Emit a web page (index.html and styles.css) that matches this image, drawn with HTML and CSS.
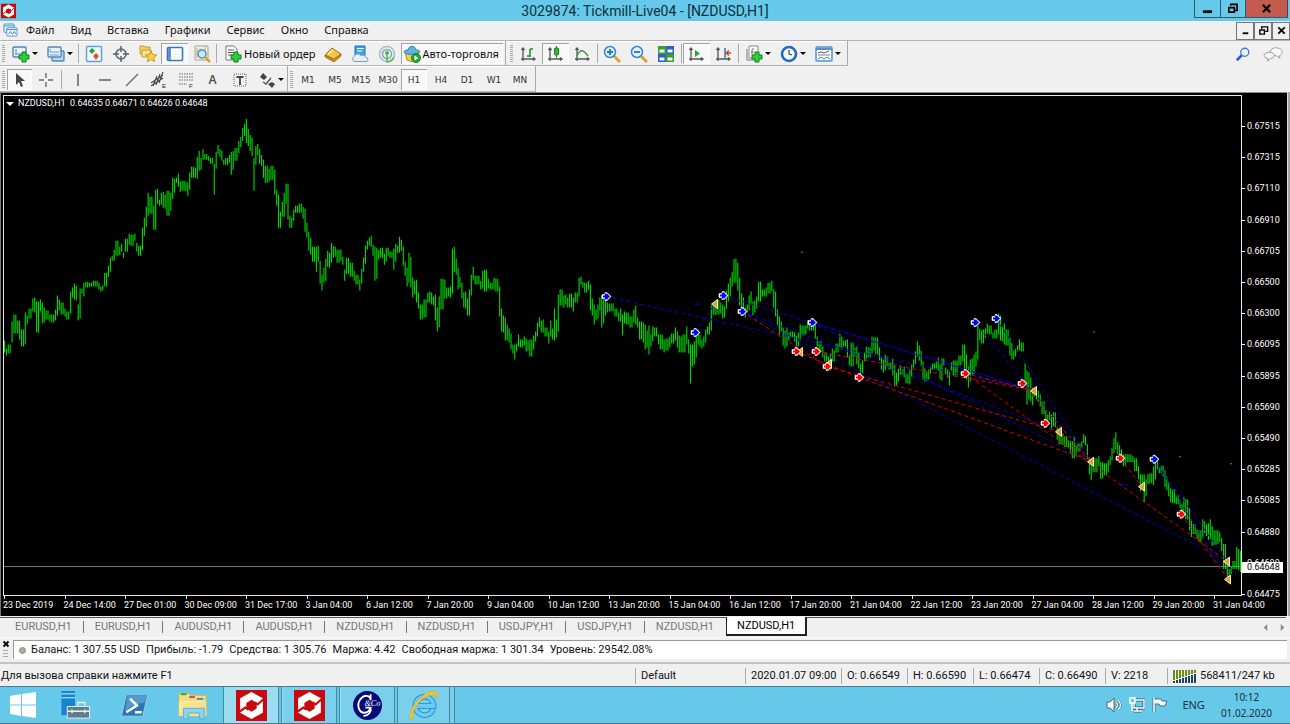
FILE: index.html
```html
<!DOCTYPE html>
<html lang="ru">
<head>
<meta charset="utf-8">
<title>3029874: Tickmill-Live04 - [NZDUSD,H1]</title>
<link rel="stylesheet" href="styles.css">
</head>
<body>
<svg class="defs" aria-hidden="true">
  <symbol id="logo" viewBox="0 0 30 30"><rect width="30" height="30" fill="#c9090f"/><path d="M15 2 26 8v14l-11 6L4 22V8z" fill="#fff"/><path d="M15 9.500l5 3v5.500l-5 3-5-3v-5.500z" fill="#c9090f"/><path d="M18 12l3 2 5.500-5M12 19l-3-2-5.500 4" fill="none" stroke="#c9090f" stroke-width="2"/></symbol>
  <symbol id="axes" viewBox="0 0 18 18"><path d="M4 3v13M2 14h14M2.500 5 4 3l1.500 2M14 12.500 16 14l-2 1.500" fill="none" stroke="#555" stroke-width="1.300"/></symbol>
  <symbol id="plus" viewBox="0 0 12 12"><path d="M4 1h4v3h3v4H8v3H4V8H1V4h3z" fill="#2fce35" stroke="#0a8417"/></symbol>
</svg>

<header class="titlebar">
  <svg class="app-icon" viewBox="0 0 30 30"><use href="#logo"/></svg>
  <h1>3029874: Tickmill-Live04 - [NZDUSD,H1]</h1>
  <div class="window-buttons">
    <button aria-label="Свернуть"><svg viewBox="0 0 12 12"><path d="M1 8h10v3H1z"/></svg></button>
    <button aria-label="Восстановить"><svg viewBox="0 0 12 12"><path d="M2 5h6v5H2zM4 3V1.500h7V8H9" fill="none" stroke="#000" stroke-width="1.800"/></svg></button>
    <button class="close" aria-label="Закрыть"><svg viewBox="0 0 12 12"><path d="M2 2l8 8M10 2l-8 8" stroke="#000" stroke-width="2.400"/></svg></button>
  </div>
</header>

<nav class="menubar">
  <svg class="menu-icon" viewBox="0 0 16 16"><rect x="1" y="1" width="11" height="9" rx="1" fill="#d7e9fa" stroke="#5a94cf"/><path d="M1 3h11" stroke="#5a94cf"/><rect x="4" y="5" width="11" height="9" rx="1" fill="#edf6ff" stroke="#5a94cf"/><path d="M4 7h11M6 12l2-3 2 3 2-3 2 3" fill="none" stroke="#4b83c4"/></svg>
  <button>Файл</button><button>Вид</button><button>Вставка</button><button>Графики</button><button>Сервис</button><button>Окно</button><button>Справка</button>
  <div class="mdi-buttons">
    <button aria-label="Свернуть график"><svg viewBox="0 0 12 12"><path d="M3 8h6v2H3z"/></svg></button>
    <button aria-label="Восстановить график"><svg viewBox="0 0 12 12"><path d="M2 5.500h5V10H2zM4 4V2h6.500v5H8" fill="none" stroke="#000" stroke-width="1.500"/></svg></button>
    <button aria-label="Закрыть график"><svg viewBox="0 0 12 12"><path d="M2.500 2.500l7 7M9.500 2.500l-7 7" stroke="#000" stroke-width="2"/></svg></button>
  </div>
</nav>

<div class="toolbar main-tools">
  <div class="group">
    <i class="grip"></i>
    <button class="drop" aria-label="Новый график"><svg viewBox="0 0 18 18"><rect x="1" y="2" width="13" height="10" rx="1" fill="#e9f3fc" stroke="#4e86bb" stroke-width="1.400"/><path d="M4 4v6M3 9h9" stroke="#6d8ba6"/><use href="#plus" x="6" y="6" width="12" height="12"/></svg></button>
    <button class="drop" aria-label="Профили"><svg viewBox="0 0 18 18"><rect x="5" y="6" width="12" height="10" rx="1" fill="#b9d7ef" stroke="#4e86bb" stroke-width="1.400"/><rect x="1" y="2" width="13" height="10" rx="1" fill="#e4f0fb" stroke="#4e86bb" stroke-width="1.400"/><path d="M3 4v3h9M3 10h9" fill="none" stroke="#7799b8"/></svg></button>
    <i class="sep"></i>
    <button class="tool" aria-label="Обзор рынка"><svg viewBox="0 0 18 18"><rect x="1.500" y="1.500" width="15" height="15" rx="1" fill="#f4faff" stroke="#5fa3d6" stroke-width="1.500"/><path d="M7 3l3 3-3 3-3-3z" fill="#20a43b"/><path d="M11 8l3 3-3 4-3-4z" fill="#e5502c"/></svg></button>
    <button class="tool" aria-label="Окно данных"><svg viewBox="0 0 18 18"><circle cx="9" cy="9" r="5" fill="none" stroke="#5b6065" stroke-width="1.500"/><path d="M9 1v6M9 11v6M1 9h6M11 9h6" stroke="#5b6065" stroke-width="1.500"/></svg></button>
    <button class="tool" aria-label="Навигатор"><svg viewBox="0 0 18 18"><path d="M1 1h4l1 1h5v7H1z" fill="#f6d365" stroke="#c49a2e"/><path d="M3 5h9v7H3z" fill="#ffe58b" stroke="#c49a2e"/><path d="M12 6l1.700 3.600 4 .4-3 2.700.9 4L12 14.600 8.500 16.700l.9-4-3-2.700 4-.4z" fill="#ffd33e" stroke="#bb7d15" stroke-width=".8"/></svg></button>
    <button class="tool on" aria-pressed="true" aria-label="Терминал"><svg viewBox="0 0 18 18"><rect x="1.500" y="2.500" width="15" height="13" rx="1" fill="#fff" stroke="#3577bd" stroke-width="1.600"/><path d="M2 3h3v12H2z" fill="#5c9ad8"/><path d="M7 6h8M7 9h8M7 12h8" stroke="#e2ebf3"/><path d="M3 5h1M3 8h1M3 11h1" stroke="#d02828"/></svg></button>
    <button class="tool" aria-label="Тестер стратегий"><svg viewBox="0 0 18 18"><path d="M2 1h13v14H2z" fill="#f4f1e9" stroke="#aaa28e"/><path d="M4 3v10M7 3v10M4 6h9M12 2v4" stroke="#c1a57e"/><circle cx="9" cy="9" r="4" fill="#cae7fa" fill-opacity=".85" stroke="#4a90c9" stroke-width="1.500"/><path d="M12 12l5 5" stroke="#dba32f" stroke-width="2.500"/></svg></button>
    <i class="sep"></i>
    <button class="labelled order"><svg viewBox="0 0 18 18"><path d="M2 1h8l3 3v11H2z" fill="#fff" stroke="#777"/><path d="M4 5h6M4 7.500h7M4 10h5" stroke="#555"/><use href="#plus" x="6" y="6" width="12" height="12"/></svg>Новый ордер</button>
    <button class="tool" aria-label="MetaEditor"><svg viewBox="0 0 18 18"><path d="M1 10l7-7 9 6-7 7z" fill="#f2c350" stroke="#a26c14"/><path d="M1 10l9 4 7-5v2l-7 6-9-5z" fill="#c78a22" stroke="#94600e" stroke-width=".7"/><path d="M4 9l5-4" stroke="#ffeeb0" stroke-width="1.500"/></svg></button>
    <button class="tool" aria-label="Виртуальный хостинг"><svg viewBox="0 0 18 18"><path d="M4 1h10v10H4z" fill="#38a4e8" stroke="#1b76bd"/><path d="M6 3.500h7M6 6h5" stroke="#fff"/><path d="M3 16.500a3 3 0 0 1 0-5 4 4 0 0 1 7-1 3.500 3.500 0 0 1 5 2 2 2 0 0 1 0 4z" fill="#e6edf5" stroke="#7f9ab8"/></svg></button>
    <button class="tool" aria-label="Сигналы"><svg viewBox="0 0 18 18"><circle cx="9" cy="9" r="7.500" fill="none" stroke="#a9bdcb" stroke-width="1.600"/><circle cx="9" cy="9" r="4.500" fill="none" stroke="#7fa6bb" stroke-width="1.600"/><circle cx="9" cy="8" r="2" fill="#44b64a"/><path d="M9 9v8a8 8 0 0 0 7-5" fill="none" stroke="#5cb862" stroke-width="1.600"/></svg></button>
    <button class="labelled auto on" aria-pressed="true"><svg viewBox="0 0 18 18"><path d="M2 7l2 8 5 2 6-3 1-7z" fill="#f3cc4b" stroke="#b58d20"/><path d="M5 5c1-5 7-5 8 0 4 0 5 2 2 3-4 2-9 2-13 0-2-1-1-3 3-3z" fill="#62b4e2" stroke="#2d7fb6"/><circle cx="13" cy="13" r="4.500" fill="#22a933" stroke="#118020"/><path d="M11.500 10.500v5L15.500 13z" fill="#fff"/></svg>Авто-торговля</button>
  </div>
  <div class="group">
    <i class="grip"></i>
    <button class="tool" aria-label="Бары"><svg viewBox="0 0 18 18"><use href="#axes"/><path d="M11 4v8M11 4h3M8 11h3" stroke="#17912a" stroke-width="1.500"/></svg></button>
    <button class="tool on" aria-pressed="true" aria-label="Свечи"><svg viewBox="0 0 18 18"><use href="#axes"/><path d="M10.500 1v12" stroke="#17912a"/><rect x="8.500" y="3" width="4" height="7" rx="1" fill="#27bd3c" stroke="#108020"/></svg></button>
    <button class="tool" aria-label="Линия"><svg viewBox="0 0 18 18"><use href="#axes"/><path d="M4 11c3-7 6-7 11 0" fill="none" stroke="#319a42" stroke-width="1.300"/></svg></button>
    <i class="sep"></i>
    <button class="tool" aria-label="Увеличить"><svg viewBox="0 0 18 18"><path d="M11 11l6 6" stroke="#d9a52d" stroke-width="3"/><circle cx="7" cy="7" r="5.500" fill="#e0f2ff" stroke="#3688cc" stroke-width="1.500"/><path d="M4 7h6M7 4v6" stroke="#2278bd" stroke-width="1.800"/></svg></button>
    <button class="tool" aria-label="Уменьшить"><svg viewBox="0 0 18 18"><path d="M11 11l6 6" stroke="#d9a52d" stroke-width="3"/><circle cx="7" cy="7" r="5.500" fill="#e0f2ff" stroke="#3688cc" stroke-width="1.500"/><path d="M4 7h6" stroke="#2278bd" stroke-width="1.800"/></svg></button>
    <button class="tool" aria-label="Упорядочить окна"><svg viewBox="0 0 18 18"><path d="M1 1h8v8H1zM9 9h8v8H9z" fill="#3d9f2b"/><path d="M9 1h8v8H9zM1 9h8v8H1z" fill="#2d62ba"/><path d="M2.500 4.500h5v3h-5zM10.500 4.500h5v3h-5zM2.500 12.500h5v3h-5zM10.500 12.500h5v3h-5z" fill="#eef6ff"/></svg></button>
    <i class="sep"></i>
    <button class="tool on" aria-pressed="true" aria-label="Автопрокрутка"><svg viewBox="0 0 18 18"><use href="#axes"/><path d="M8 5l5 3.500L8 12z" fill="#24a439"/></svg></button>
    <button class="tool" aria-label="Сдвиг графика"><svg viewBox="0 0 18 18"><use href="#axes"/><path d="M11 3v10" stroke="#3674a7" stroke-width="1.500"/><path d="M17 8h-4M15 5.500L12 8l3 2.500" fill="none" stroke="#cd4825" stroke-width="1.500"/></svg></button>
    <i class="sep"></i>
    <button class="drop" aria-label="Индикаторы"><svg viewBox="0 0 18 18"><path d="M4 1h9v12H4z" fill="#fff" stroke="#888"/><path d="M2 4v11h8M7 10V5q0-2 2-1M6 7h3" fill="none" stroke="#777"/><use href="#plus" x="6" y="6" width="12" height="12"/></svg></button>
    <button class="drop" aria-label="Периоды"><svg viewBox="0 0 18 18"><circle cx="9" cy="9" r="7" fill="#f2f8ff" stroke="#236bbc" stroke-width="2.600"/><path d="M9 5v4l3 1" fill="none" stroke="#444" stroke-width="1.200"/></svg></button>
    <button class="drop" aria-label="Шаблоны"><svg viewBox="0 0 18 18"><rect x="1" y="2" width="16" height="14" rx="1" fill="#f6fbff" stroke="#5690c7" stroke-width="1.500"/><path d="M1 4h16" stroke="#5690c7" stroke-width="2"/><path d="M3 8l3-1 3 1 5-2" fill="none" stroke="#b4412c"/><path d="M3 10h12" stroke="#5690c7"/><path d="M3 14l3-2 3 2 3-2 3 2" fill="none" stroke="#3c9b4c"/></svg></button>
  </div>
  <div class="toolbar-end">
    <button aria-label="Поиск"><svg viewBox="0 0 18 18"><path d="M8 10l-6 6" stroke="#2960c4" stroke-width="3"/><circle cx="11" cy="7" r="4.500" fill="#eef5ff" stroke="#3d77d6" stroke-width="1.500"/></svg></button>
    <button class="wide" aria-label="Чат"><svg viewBox="0 0 22 18"><path d="M14 2c9 0 9 8 4 9l1 3-4-3C6 11 6 2 14 2z" fill="#f7f7f7" stroke="#9a9a9a"/><path d="M7 7c7 0 7 7 1 7l-3 3v-3c-6-1-5-7 2-7z" fill="#f4f4f6" stroke="#8d8d8d"/></svg></button>
  </div>
</div>

<div class="toolbar draw-tools">
  <div class="group">
    <i class="grip"></i>
    <button class="tool pointer on" aria-pressed="true" aria-label="Курсор"><svg viewBox="0 0 18 18"><path d="M5 2v12l3-3 2 5 2-1-2-5h4z" fill="#444"/></svg></button>
    <button class="tool" aria-label="Перекрестие"><svg viewBox="0 0 18 18"><path d="M9 2v5M9 11v5M2 9h5M11 9h5" stroke="#666" stroke-width="1.400"/></svg></button>
    <i class="sep"></i>
    <button class="tool" aria-label="Вертикальная линия"><svg viewBox="0 0 18 18"><path d="M9 3v12" stroke="#555" stroke-width="1.400"/></svg></button>
    <button class="tool" aria-label="Горизонтальная линия"><svg viewBox="0 0 18 18"><path d="M3 9h12" stroke="#555" stroke-width="1.400"/></svg></button>
    <button class="tool" aria-label="Трендовая линия"><svg viewBox="0 0 18 18"><path d="M3 15L15 3" stroke="#666" stroke-width="1.300"/></svg></button>
    <button class="tool" aria-label="Равноудаленный канал"><svg viewBox="0 0 18 18"><path d="M1 12l12-8M1 15l12-8M3 15l4-10M6 14l4-11M9 12l4-11" stroke="#444" stroke-width="1.100"/><text x="12" y="17">E</text></svg></button>
    <button class="tool" aria-label="Линии Фибоначчи"><svg viewBox="0 0 18 18"><path d="M2 3h14M2 6h14M2 9h14M2 13h8" stroke="#666" stroke-dasharray="1.500 1"/><text x="12" y="17">F</text></svg></button>
    <button class="tool letter">A</button>
    <button class="tool" aria-label="Текстовая метка"><svg viewBox="0 0 18 18"><rect x="3" y="3" width="12" height="12" fill="none" stroke="#666" stroke-dasharray="1 1"/><path d="M5.500 6h7M9 6v8" stroke="#444" stroke-width="1.800"/></svg></button>
    <button class="drop" aria-label="Стрелки"><svg viewBox="0 0 18 18"><path d="M2 6l3-4 4 4-3 3zM10 13l4-2 3 2-3 4z" fill="#444"/><path d="M5 11l3 2 5-6" fill="none" stroke="#555" stroke-width="1.400"/></svg></button>
  </div>
  <div class="group periods">
    <i class="grip"></i>
    <button>M1</button><button>M5</button><button>M15</button><button>M30</button><button class="on" aria-pressed="true">H1</button><button>H4</button><button>D1</button><button>W1</button><button>MN</button>
  </div>
</div>

<main class="chart">
  <section class="plot">
    <svg id="price-chart" viewBox="4 96 1237 500" preserveAspectRatio="none" role="img" aria-label="NZDUSD,H1"></svg>
    <p class="quote"><i class="down"></i>NZDUSD,H1&nbsp; 0.64635 0.64671 0.64626 0.64648</p>
  </section>
  <ol class="prices">
    <li>0.67515</li><li>0.67315</li><li>0.67110</li><li>0.66910</li><li>0.66705</li><li>0.66500</li><li>0.66300</li><li>0.66095</li><li>0.65895</li><li>0.65690</li><li>0.65490</li><li>0.65285</li><li>0.65085</li><li>0.64880</li><li>0.64680<b>0.64648</b></li><li>0.64475</li>
  </ol>
  <ol class="times">
    <li>23 Dec 2019</li><li>24 Dec 14:00</li><li>27 Dec 01:00</li><li>30 Dec 09:00</li><li>31 Dec 17:00</li><li>3 Jan 04:00</li><li>6 Jan 12:00</li><li>7 Jan 20:00</li><li>9 Jan 04:00</li><li>10 Jan 12:00</li><li>13 Jan 20:00</li><li>15 Jan 04:00</li><li>16 Jan 12:00</li><li>17 Jan 20:00</li><li>21 Jan 04:00</li><li>22 Jan 12:00</li><li>23 Jan 20:00</li><li>27 Jan 04:00</li><li>28 Jan 12:00</li><li>29 Jan 20:00</li><li>31 Jan 04:00</li>
  </ol>
</main>

<nav class="tabs">
  <button>EURUSD,H1</button><button>EURUSD,H1</button><button>AUDUSD,H1</button><button>AUDUSD,H1</button><button>NZDUSD,H1</button><button>NZDUSD,H1</button><button>USDJPY,H1</button><button>USDJPY,H1</button><button>NZDUSD,H1</button><button class="current" aria-current="page">NZDUSD,H1</button>
  <div class="scrollers"><button aria-label="Назад"><svg viewBox="0 0 8 8"><path d="M6 0v8L2 4z"/></svg></button><button aria-label="Вперед"><svg viewBox="0 0 8 8"><path d="M2 0v8l4-4z"/></svg></button></div>
</nav>

<section class="terminal">
  <div class="terminal-side"><button aria-label="Закрыть терминал"><svg viewBox="0 0 8 8"><path d="M1.500 1.500l5 5M6.500 1.500l-5 5" stroke="#000" stroke-width="1.800"/></svg></button><i></i></div>
  <div class="balance"><i class="dot"></i><span>Баланс: 1 307.55 USD</span><span>Прибыль: -1.79</span><span>Средства: 1 305.76</span><span>Маржа: 4.42</span><span>Свободная маржа: 1 301.34</span><span>Уровень: 29542.08%</span></div>
</section>

<footer class="status">
  <span class="hint">Для вызова справки нажмите F1</span>
  <span class="profile">Default</span><span class="date">2020.01.07 09:00</span><span class="value">O: 0.66549</span><span class="value">H: 0.66590</span><span class="value">L: 0.66474</span><span class="value">C: 0.66490</span><span class="volume">V: 2218</span>
  <span class="traffic"><svg viewBox="0 0 23 13"><path d="M1 0v10M4 0v9M7 0v8M10 0v7M13 0v6M16 0v5M19 0v4M22 0v3" stroke="#6f8a17" stroke-width="2"/><path d="M1 11v2M4 10v3M7 9v4M10 8v5M13 7v6M16 6v7M19 5v8M22 4v9" stroke="#174763" stroke-width="2"/></svg>568411/247 kb</span>
</footer>

<nav class="taskbar">
  <button class="start" aria-label="Пуск"><svg viewBox="0 0 26 26"><path d="M0 4l11-2v10.500H0zM12 2l14-2v12.500H12zM0 13.500h11V24L0 22zM12 13.500h14V26l-14-2z" fill="#fff"/></svg></button>
  <button class="pin" aria-label="Диспетчер серверов"><svg viewBox="0 0 32 32"><path d="M2 1h14v17h-6v8H2z" fill="#1685d0"/><path d="M2 4h14M2 8h14" stroke="#dff3ff"/><path d="M19 16v-3h7v3" fill="none" stroke="#e7eff3" stroke-width="1.500"/><path d="M8 17h23v12H8z" fill="#607d8e" stroke="#e7eff3"/><path d="M8 22h23M13 20v4M26 20v4" stroke="#e7eff3" stroke-width="1.500"/></svg></button>
  <button class="pin" aria-label="PowerShell"><svg viewBox="0 0 32 32"><path d="M8 5h22l-5 22H3z" fill="#2d77ae" stroke="#9bc8e2"/><path d="M9 6h20l-2 7Q15 14 7 22z" fill="#559acb"/><path d="M12 9l7 7-11 7M17 23h7" fill="none" stroke="#fff" stroke-width="2.600"/></svg></button>
  <button class="pin" aria-label="Проводник"><svg viewBox="0 0 34 32"><path d="M2 3h10l2 2h17v22H2z" fill="#f4dc82" stroke="#cfb15c"/><path d="M4 3h6v2H4z" fill="#20a84f"/><path d="M13 6h6v2h-6z" fill="#d64d2d"/><path d="M21 8h7v2h-7z" fill="#3395cf"/><path d="M2 11h29v16H2z" fill="#fbe99f"/><path d="M2 27l6-14h23v14z" fill="#f5e08b"/><path d="M7 30V19h22v11h-5v-6H12v6z" fill="#91d3ef" stroke="#5badd1"/></svg></button>
  <button class="task active" aria-label="MetaTrader 1"><svg viewBox="0 0 30 30"><use href="#logo"/></svg></button>
  <button class="task" aria-label="MetaTrader 2"><svg viewBox="0 0 30 30"><use href="#logo"/></svg></button>
  <button class="task" aria-label="G&amp;Co"><svg viewBox="0 0 30 30"><circle cx="15" cy="15" r="14" fill="#050878"/><path d="M18 9C17 5 12 4 8 9c-4 6-1 13 4 13 3 0 5-2 6-5h-5M18 4v6M18 17c1 4-2 8-7 8" fill="none" stroke="#fff" stroke-width="1.800"/><text x="12" y="15">&amp;Co</text></svg></button>
  <button class="task stacked" aria-label="Internet Explorer"><svg viewBox="0 0 32 32"><path d="M26 19.500a9.500 9.500 0 1 1 .5-3H9" fill="none" stroke="#1785ca" stroke-width="5.600"/><path d="M26 19.500a9.500 9.500 0 1 1 .5-3H9" fill="none" stroke="#6acbf7" stroke-width="4"/><path d="M3 30C-3 22 19-3 29 2q3 2 0 8 1-6-4-5C14 6 2 22 6 28z" fill="#f5c829" stroke="#d9a716" stroke-width=".6"/></svg></button>
  <div class="tray">
    <svg viewBox="0 0 16 16"><path d="M1 5h3l4-4v14l-4-4H1z" fill="#fff" stroke="#476c7b"/><path d="M10 5q3 3 0 6M12 3q5 5 0 10" fill="none" stroke="#476c7b" stroke-width="2.400"/><path d="M10 5q3 3 0 6M12 3q5 5 0 10" fill="none" stroke="#eefaff" stroke-width="1.300"/></svg>
    <svg viewBox="0 0 16 16"><path d="M5 3h10v8H5zM8 11v3M5 14h8" fill="none" stroke="#395e6d" stroke-width="3"/><path d="M5 3h10v8H5zM8 11v3M5 14h8" fill="none" stroke="#fff" stroke-width="1.400"/><path d="M1 1h5v5H1zM3 6v8" fill="#66c9ea" stroke="#fff" stroke-width="1.500"/></svg>
    <svg viewBox="0 0 16 16"><path d="M2 1v14" stroke="#476c7b" stroke-width="3"/><path d="M2 2h7l1 2h5l-2 5H8L7 7H2z" fill="#fff" stroke="#476c7b"/><path d="M2 1v14" stroke="#fff" stroke-width="1.500"/></svg>
    <span class="lang">ENG</span>
    <time datetime="2020-02-01T10:12">10:12<br>01.02.2020</time>
  </div>
</nav>
<script src="chart.js"></script>
</body>
</html>
```
FILE: styles.css
```css
* { box-sizing: border-box; }
body {
  margin: 0;
  min-height: 100vh;
  display: flex;
  flex-direction: column;
  background: #f0f0f0;
  color: #111;
  font: 11px/16px "Noto Sans", "Open Sans", sans-serif;
  white-space: nowrap;
}
button { border: 0; padding: 0; background: none; color: inherit; font: inherit; }
svg { display: block; flex: none; }
ol { list-style: none; margin: 0; padding: 0; }
.defs { position: absolute; width: 0; height: 0; }

.titlebar { display: grid; grid-template-columns: 96px 1fr 96px; align-items: center; height: 21px; background: #66c9ea; }
.app-icon { width: 15px; height: 16px; margin-left: 1px; }
.titlebar h1 { margin: 0; text-align: center; font: 400 14px/18px Roboto, sans-serif; color: #10303c; }
.window-buttons { display: flex; align-self: start; height: 18px; }
.window-buttons button { flex: 26; display: grid; place-items: center; border: 1px solid #2f5968; border-top: 0; border-right: 0; }
.window-buttons .close { flex: 43; background: #c35b50; border-right: 1px solid #653832; margin-right: 2px; }
.window-buttons svg { width: 11px; height: 11px; }

.menubar { display: flex; align-items: center; height: 19px; padding-left: 3px; }
.menu-icon { width: 15px; height: 15px; margin-right: 8px; }
.menubar > button { margin-right: 16px; line-height: 14px; padding-bottom: 2px; }
.mdi-buttons { display: flex; margin-left: auto; height: 18px; }
.mdi-buttons button { width: 18px; display: grid; place-items: center; border: 1px solid #777; }
.mdi-buttons svg { width: 11px; height: 11px; }

.toolbar { display: flex; height: 26px; border-top: 1px solid #b4b4b4; }
.draw-tools { border-top: 0; }
.group { display: flex; align-items: stretch; border-right: 1px solid #aaa; border-bottom: 1px solid #b4b4b4; box-shadow: inset 0 1px #fff; padding: 2px 2px 1px 0; }
.group + .group { padding-left: 2px; }
.grip { width: 3px; margin: 2px; background: repeating-linear-gradient(#aaa 0 1px, #f0f0f0 1px 2px); }
.sep { width: 1px; margin: 1px; background: #aaa; }
.tool { width: 27px; display: grid; place-items: center; }
.tool svg, .drop svg, .labelled svg { width: 18px; height: 18px; }
.tool text { font: 6px "Liberation Sans", sans-serif; fill: #222; }
.letter { font-size: 12px; font-weight: 600; color: #555; }
.on { background: #f8f8f8; box-shadow: inset 1px 1px #a5a5a5, inset -1px -1px #fff; }
.drop { width: 35px; display: flex; align-items: center; padding-left: 5px; }
.drop::after { content: ""; margin-left: 2px; border: 3px solid transparent; border-top-color: #000; border-bottom: 0; }
.labelled { display: flex; align-items: center; gap: 2px; padding: 0 4px; }
.order { margin-left: 2px; }
.auto { margin: 0; padding: 0 4px 0 2px; }
.toolbar-end { display: flex; align-items: center; gap: 11px; margin-left: auto; padding-right: 6px; }
.toolbar-end svg { width: 16px; height: 16px; }
.toolbar-end .wide svg { width: 22px; }
.draw-tools .group { padding: 3px 1px 1px 0; }
.draw-tools .pointer { width: 25px; }
.draw-tools .sep { margin: 1px 2px; }
.draw-tools .drop { width: 33px; }
.periods button { width: 26px; margin-right: 1px; font: 9px "DejaVu Sans", sans-serif; color: #333; }
.periods button:nth-of-type(2n) { margin-right: 0; }

.chart {
  flex: 1;
  display: grid;
  grid-template: minmax(0, 1fr) 19px / minmax(0, 1fr) 44px;
  min-height: 300px;
  margin-right: 3px;
  padding: 2px 1px 1px 2px;
  background: #000;
  border-top: 1px solid #888;
  border-left: 1px solid #777;
  box-shadow: 1px 0 #ddd, 3px 0 #a5a5a5;
  color: #fff;
  font: 9px/11px Roboto, "Liberation Sans", sans-serif;
}
.plot { position: relative; border: 1px solid #e8e8e8; min-height: 0; }
#price-chart { position: absolute; width: 100%; height: 100%; }
.bars { stroke: #00dc00; stroke-width: 1.1; fill: none; }
.trade { fill: none; stroke-width: 1; stroke-dasharray: 4 3; }
.buy { stroke: #0000d8; }
.sell { stroke: #d80000; }
.level { stroke: #6f8090; }
.quote { position: absolute; margin: 0; top: 2px; left: 2px; display: flex; align-items: center; }
.down { border: 4px solid transparent; border-top-color: #fff; border-bottom: 0; margin-right: 4px; }
.prices { grid-area: 1 / 2 / 3 / 3; display: grid; grid-template-rows: repeat(16, 1fr); padding: 16px 0 5px; }
.prices li { position: relative; display: flex; align-items: center; }
.prices li::before { content: ""; width: 3px; height: 1px; margin-right: 2px; background: #fff; }
.prices b { position: absolute; left: 0; top: 46%; padding: 0 3px 0 5px; background: #fff; color: #000; font-weight: 400; }
.times { display: grid; grid-template-columns: repeat(20, 1fr) 30px; margin-right: -1px; padding-top: 4px; }
.times li { position: relative; }
.times li::before { content: ""; position: absolute; left: 1px; top: -4px; width: 1px; height: 3px; background: #fff; }

.tabs, .terminal, .status { font-family: Roboto, sans-serif; }
.tabs { display: flex; height: 21px; padding-right: 4px; color: #777; border-bottom: 1px solid #fafafa; margin-top: 1px; }
.tabs > button { height: 19px; padding: 0 12px 0 11px; border-top: 1px solid #555; background: linear-gradient(#777, #777) right 3px / 1px 12px no-repeat; }
.tabs > button:first-child { padding-left: 15px; }
.tabs > button:nth-last-of-type(2) { background: none; }
.tabs > .current { background: #fff; color: #000; border: solid #222; border-width: 0 2px 2px 1px; padding: 0 10px; }
.scrollers { flex: 1; display: flex; justify-content: flex-end; align-items: center; gap: 10px; border-top: 1px solid #555; height: 19px; }
.scrollers svg { width: 7px; height: 7px; fill: #888; }

.terminal { display: flex; height: 26px; padding: 2px 3px 3px 0; border-bottom: 2px solid #c4c4c4; }
.terminal-side { width: 13px; padding-left: 2px; }
.terminal-side svg { width: 8px; height: 8px; }
.terminal-side button { display: block; }
.terminal-side i { display: block; width: 5px; height: 8px; margin: 2px 1px; background: repeating-linear-gradient(#aaa 0 1px, transparent 1px 3px); }
.balance { flex: 1; display: flex; align-items: center; gap: 6px; padding-left: 5px; background: #fff; border-top: 1px solid #999; border-left: 1px solid #999; }
.dot { width: 7px; height: 7px; border-radius: 50%; background: #aaa; border: 1px solid #888; margin-right: -1px; }

.status { display: flex; align-items: center; height: 22px; padding-top: 2px; }
.status > span { border-left: 1px solid #aaa; padding-left: 5px; }
.status > .hint { flex: 1; border: 0; padding-left: 1px; }
.status > .profile { width: 110px; }
.status > .date { width: 96px; }
.status > .value { width: 66px; }
.status > .volume { width: 62px; }
.status > .traffic { width: 123px; display: flex; align-items: center; gap: 4px; }
.traffic svg { width: 23px; height: 13px; }

.taskbar { display: flex; height: 38px; background: #66c9ea; border-top: 1px solid #52798a; border-bottom: 1px solid #52798a; }
.taskbar button { display: grid; place-items: center; }
.start { width: 45px; }
.start svg { width: 26px; height: 26px; }
.pin { width: 59px; }
.pin svg { width: 32px; height: 31px; }
.pin:nth-child(4) { margin-right: 1px; }
.task { width: 56px; margin-right: 2px; background: #7ad0ec; border: solid #43899f; border-width: 0 1px; box-shadow: inset 1px 0 #9bddf1; }
.task.active { background: #9bdcf1; }
.task svg { width: 31px; height: 31px; }
.task text { font: italic 8px "Liberation Serif", serif; fill: #fff; }
.task.stacked { width: 53px; box-shadow: 4px 0 #7ad0ec, 5px 0 #43899f; }
.tray { margin-left: auto; padding-right: 18px; display: flex; align-items: center; gap: 7px; color: #12323d; }
.tray svg { width: 16px; height: 16px; }
.lang { margin: 0 9px 0 7px; }
.tray time { text-align: center; font-size: 10px; line-height: 16px; }
```
FILE: chart.js
```js
// Each entry is "x high low" in chart units.
const bars = `4 341 353,6 349 356,9 345 354,12 322 343,15 315 334,18 321 334,20 321 340,22 330 347,25 313 345,27 316 325,30 309 319,33 299 312,35 298 313,38 302 333,40 300 312,42 303 324,44 308 323,47 311 320,50 315 322,53 315 323,56 310 321,58 296 316,60 300 311,62 303 315,65 309 317,68 312 320,70 292 314,72 288 298,74 284 300,76 286 301,78 305 321,80 289 319,82 289 294,84 283 297,86 282 288,90 283 287,96 281 287,99 283 290,101 287 292,103 286 291,106 273 287,108 266 277,110 258 272,112 256 261,115 250 261,117 241 256,119 247 255,121 244 252,123 253 258,126 239 252,129 234 245,132 235 246,135 234 241,137 243 252,140 246 256,143 228 250,145 218 236,147 207 227,149 193 216,151 197 214,153 206 230,155 190 230,157 189 204,160 200 206,162 193 205,164 192 208,166 195 209,168 191 216,170 193 211,172 178 199,174 179 193,176 178 183,178 174 187,180 182 192,183 181 191,186 182 191,188 183 196,190 173 190,193 167 178,195 168 178,197 157 179,199 151 171,201 158 170,203 149 160,206 154 160,209 156 161,212 158 164,214 164 195,216 152 169,218 145 154,220 149 157,222 151 161,224 160 165,227 158 165,230 155 163,232 152 175,234 151 170,236 148 161,238 141 153,240 137 147,242 128 141,244 124 136,246 119 143,248 129 146,250 135 151,252 138 156,254 158 191,256 146 165,258 144 155,260 149 164,262 155 166,264 160 178,266 166 183,269 169 182,272 166 180,274 170 195,276 190 206,278 195 228,280 212 228,282 202 217,284 193 217,286 184 204,288 184 220,290 216 228,292 218 228,294 210 221,297 206 213,300 204 213,303 207 219,305 209 232,307 223 238,309 232 251,311 238 255,313 247 262,315 247 262,317 247 272,319 246 262,321 261 284,322 275 291,324 268 283,326 259 281,328 251 267,330 253 268,332 243 263,334 246 258,336 247 257,338 250 263,341 250 261,343 257 265,345 270 281,348 258 274,351 263 277,354 271 281,357 275 285,359 280 291,361 269 284,363 258 272,365 246 264,367 241 250,369 238 246,371 236 247,373 245 256,375 247 281,377 248 279,379 250 260,382 248 258,384 254 265,386 248 262,389 248 256,391 252 258,393 249 270,395 244 262,397 246 253,399 237 253,401 240 251,403 247 266,405 262 276,407 268 287,409 253 283,411 257 288,413 278 298,415 281 295,417 280 303,419 293 309,421 305 320,423 305 320,425 300 318,427 293 303,429 292 303,431 293 305,434 297 306,436 295 321,438 308 332,440 297 328,442 279 310,444 280 299,446 288 299,449 288 297,451 287 298,453 249 294,455 247 272,457 259 275,459 268 290,460 277 288,462 283 299,464 293 308,466 292 309,468 299 316,470 290 316,471 275 296,473 267 280,475 276 285,478 276 285,480 281 290,483 271 289,486 270 292,488 279 289,491 283 290,494 278 290,497 279 292,499 287 317,501 309 332,503 316 333,505 318 341,507 325 341,509 329 343,511 334 350,513 345 354,515 345 360,517 344 352,518 335 347,521 340 348,524 337 346,526 339 352,528 341 351,530 340 357,532 340 357,534 336 350,536 332 342,538 323 337,540 318 328,542 321 333,544 320 333,546 328 337,548 332 344,550 321 337,552 329 340,554 309 341,556 320 338,558 295 332,561 290 306,564 296 308,566 295 305,568 298 308,570 294 308,573 298 312,576 293 303,579 278 297,581 277 285,583 282 288,586 283 293,588 281 290,590 285 311,592 299 316,594 305 325,596 310 321,598 305 319,600 298 311,602 296 328,604 300 324,606 297 316,608 303 313,610 304 312,613 304 312,616 309 317,618 313 322,620 309 322,622 315 336,624 312 324,626 313 325,628 313 325,631 317 328,633 310 323,635 306 325,637 318 328,640 322 340,643 323 343,645 325 350,647 331 348,649 326 355,651 335 347,653 327 342,656 328 337,658 335 345,661 335 350,664 340 353,667 339 351,670 337 348,673 334 344,676 328 341,678 332 348,680 336 353,682 337 353,684 335 353,686 327 345,688 340 354,690 345 384,692 345 367,694 342 365,696 330 358,698 331 345,700 335 347,702 340 349,704 337 347,706 330 343,708 327 335,710 323 335,711 306 331,713 305 315,716 302 316,718 300 315,720 303 314,722 305 319,724 307 318,727 291 309,729 284 302,731 278 297,733 272 287,735 259 283,737 263 291,739 278 306,741 294 312,743 298 315,745 308 318,747 305 313,749 296 311,751 292 305,753 302 316,755 301 313,757 297 309,760 282 302,762 290 297,765 290 297,767 288 297,769 283 294,771 281 292,773 290 308,775 292 317,777 310 326,779 317 337,781 322 332,783 328 346,785 331 349,787 328 347,789 333 341,792 332 338,795 333 342,797 336 347,799 333 347,801 325 341,803 326 336,805 326 335,808 321 329,811 325 331,813 320 331,815 325 339,817 337 347,819 342 351,821 341 352,823 347 358,826 353 362,828 357 370,830 354 371,832 349 362,835 351 362,837 344 353,840 334 348,842 337 350,845 341 347,848 340 358,850 356 366,852 343 367,855 348 357,857 347 365,859 353 369,861 364 377,863 361 374,865 353 362,867 347 360,869 348 358,872 337 354,874 338 351,877 338 355,880 348 361,882 357 370,884 360 373,886 355 371,888 357 368,890 363 370,892 359 376,894 365 387,896 373 386,898 369 382,900 366 375,903 370 375,905 367 378,907 374 384,909 370 385,911 365 377,913 360 368,915 352 365,917 342 357,919 346 361,921 351 367,923 362 380,925 369 382,927 372 382,929 370 380,931 367 374,933 364 370,936 362 370,938 358 371,940 365 380,942 359 381,944 359 366,946 368 375,948 370 378,950 372 386,952 363 371,954 361 376,957 361 376,960 356 366,962 345 362,964 345 370,966 355 380,968 367 388,970 360 382,972 359 375,974 355 375,976 352 367,978 325 360,980 329 341,983 330 344,986 329 338,988 324 334,990 326 335,993 333 339,996 330 339,998 314 335,1000 316 341,1002 327 342,1004 324 345,1006 330 346,1008 330 346,1010 338 356,1012 343 360,1014 351 360,1016 349 357,1018 346 352,1020 340 351,1022 343 352,1025 364 385,1027 371 405,1029 373 400,1031 378 402,1033 388 406,1035 389 397,1037 391 400,1039 391 402,1041 395 407,1043 402 415,1045 411 425,1047 415 424,1050 412 421,1052 415 430,1054 413 427,1056 413 428,1058 428 440,1060 430 445,1063 434 446,1066 437 448,1068 441 449,1071 442 454,1073 442 459,1075 437 459,1077 446 457,1079 444 452,1082 442 449,1084 435 444,1086 437 446,1088 445 460,1090 458 475,1092 463 481,1094 462 473,1096 459 473,1098 457 467,1100 463 480,1102 463 479,1105 464 476,1108 461 473,1110 457 466,1112 449 461,1114 439 454,1116 433 450,1118 443 455,1120 446 457,1122 450 463,1124 455 467,1127 455 463,1130 455 463,1133 457 463,1136 459 472,1138 467 480,1140 475 492,1142 475 485,1144 475 503,1146 480 497,1148 475 485,1151 474 484,1153 467 486,1155 457 480,1157 460 470,1160 467 474,1163 466 477,1165 471 488,1167 477 491,1169 483 497,1171 489 503,1174 490 504,1177 496 505,1180 501 509,1182 505 516,1184 498 512,1187 500 520,1190 509 531,1192 520 538,1194 525 535,1197 530 540,1200 531 543,1203 520 540,1205 522 534,1207 525 537,1209 524 541,1211 520 540,1213 527 547,1215 531 546,1218 531 545,1220 533 543,1222 539 552,1225 545 570,1227 565 582,1230 570 578,1232 568 575,1234 562 570,1236 548 570,1238 550 571,1240 552 573`
  .split(",").map((entry) => entry.split(" ").map(Number));

const buys = ["606 297 1034 391", "695 333 715 304", "723 296 1034 391", "742 312 1059 432", "742 312 1227 562", "812 323 1034 391", "812 323 1091 462", "975 323 1091 462", "996 319 1091 462", "1154 460 1227 562", "1154 460 1228 580"];
const sells = ["742 312 829 368", "796 352 859 378", "816 352 1034 391", "827 367 1059 432", "859 378 1091 462", "965 374 1034 391", "965 374 1227 562", "1022 384 1091 462", "1045 424 1091 462", "1120 459 1142 487", "1181 515 1228 580"];
const buyMarks = [[606, 297], [695, 333], [723, 296], [742, 312], [812, 323], [975, 323], [996, 319], [1154, 460]];
const sellMarks = [[796, 352], [816, 352], [827, 367], [859, 378], [965, 374], [1022, 384], [1045, 424], [1120, 459], [1181, 515]];
const exits = [[715, 304], [800, 352], [829, 364], [1034, 391], [1059, 432], [1091, 462], [1142, 487], [1227, 562], [1228, 580]];
const dots = [[801, 252], [1093, 332], [1179, 457], [1230, 464]];

// One bar per hour; every bar takes the range recorded closest to it.
const pitch = 1.89;
let path = "";
let cursor = 0;
for (let x = 4.5; x < 1241; x += pitch) {
  while (cursor < bars.length - 1 && Math.abs(bars[cursor + 1][0] - x) <= Math.abs(bars[cursor][0] - x)) cursor++;
  path += `M${x.toFixed(2)} ${bars[cursor][1]}V${bars[cursor][2]}`;
}

const line = (points, kind) => {
  const [x1, y1, x2, y2] = points.split(" ");
  return `<path class="trade ${kind}" d="M${x1} ${y1}L${x2} ${y2}"/>`;
};
const arrow = ([x, y], fill) =>
  `<path d="M${x - 1} ${y - 4}h2l4 4-4 4h-2v-2h-3v-4h3z" fill="#fff" stroke="#fff" stroke-width=".6"/><path d="M${x - 1} ${y - 3}h2l3 3-3 3h-2v-2h-2v-2h2z" fill="${fill}"/>`;

document.getElementById("price-chart").innerHTML =
  `<path class="level" d="M4 567.5H1241"/><path class="bars" d="${path}"/>` +
  buys.map((points) => line(points, "buy")).join("") +
  sells.map((points) => line(points, "sell")).join("") +
  `<path class="buy" d="M694 304.5h7M1120 485.5h8"/>` +
  exits.map(([x, y]) => `<path d="M${x + 2.5} ${y - 4}v9l-6-4.500z" fill="#e0a02c" stroke="#f7ead0"/>`).join("") +
  buyMarks.map((mark) => arrow(mark, "#00f")).join("") +
  sellMarks.map((mark) => arrow(mark, "#f00")).join("") +
  dots.map(([x, y]) => `<path d="M${x} ${y}h2v1h-2z" fill="#777"/>`).join("");
```
